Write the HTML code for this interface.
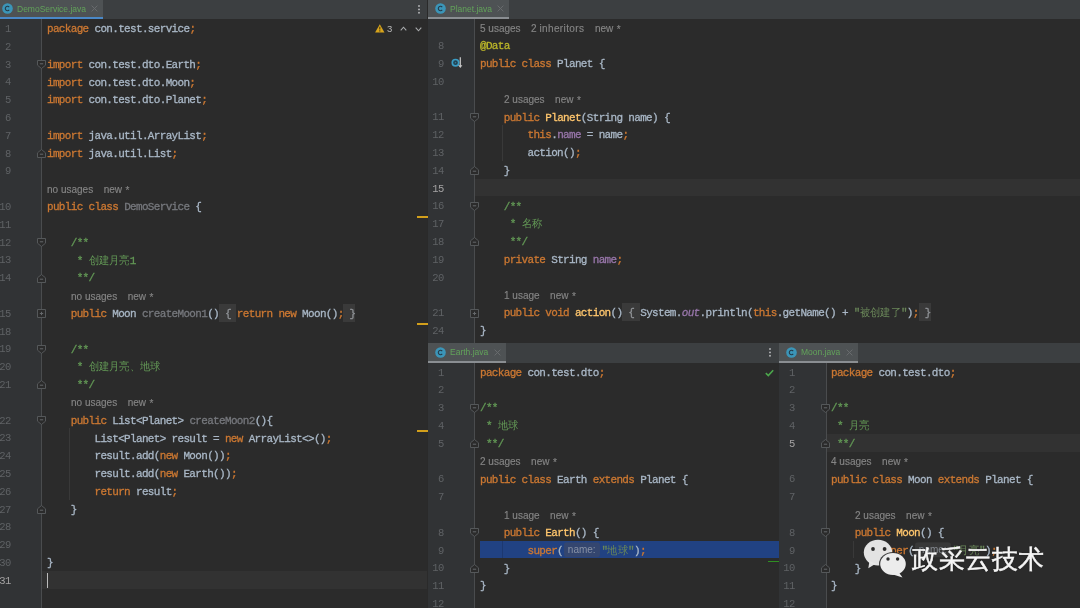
<!DOCTYPE html>
<html><head><meta charset="utf-8"><style>
html,body{margin:0;padding:0;background:#2b2b2b;}
body{width:1080px;height:608px;overflow:hidden;position:relative;}
div,svg{position:absolute;}
body{-webkit-font-smoothing:antialiased;}
.code,.ln,.hint,.tabtxt,.wm,.w3{will-change:transform;}
.tabbar{background:#3c3f41;}
.tab{background:#4e5254;}
.ulf{background:#4a88c7;}
.ulu{background:#8a8e92;}
.ed{background:#2b2b2b;}
.gut{background:#313335;}
.curl{background:#323232;}
.foldline{width:1px;background:#4a4c4e;}
.guide{width:1px;background:#393939;}
.gsel{background:#1c3870;}
.sel{background:#214283;}
.fbox{background:#3a3a3a;}
.tabtxt{font-family:"Liberation Sans",sans-serif;font-size:8.5px;color:#62a35a;white-space:pre;}
.ln{font-family:"Liberation Mono",monospace;font-size:10.5px;letter-spacing:-0.4px;color:#5f6265;text-align:right;white-space:pre;}
.ln.cur{color:#a4a3a3;}
.code{font-family:"Liberation Mono",monospace;font-size:11.0px;letter-spacing:-0.670px;white-space:pre;-webkit-text-stroke:0.3px currentColor;transform:scaleY(1.07);transform-origin:0 11.8px;}
.cj{font-size:10.4px;letter-spacing:0.3px;-webkit-text-stroke:0;}
.hint{font-family:"Liberation Sans",sans-serif;font-size:10px;color:#858585;white-space:pre;-webkit-text-stroke:0.15px currentColor;}
.gap{display:inline-block;width:10.5px;}
.ast{position:relative;top:0.8px;left:0.8px;}
.k{color:#cc7832}.t{color:#a9b7c6}.g{color:#76787d}.d{color:#629755}.a{color:#bbb529}
.m{color:#ffc66d}.f{color:#9876aa}.fi{color:#9876aa;font-style:italic}.s{color:#6a8759}.bb{color:#8f9296}
.ph{display:inline-block;box-sizing:border-box;height:14px;line-height:14px;vertical-align:1px;padding:0 0 0 3.5px;margin:0 1.7px 0 1.3px;width:35.5px;color:#858a90;background:#383838;border-radius:3px;font-family:"Liberation Sans",sans-serif;font-size:10px;letter-spacing:0;-webkit-text-stroke:0;}
.phs{background:#34466f;color:#8892a6;}
.dots{width:2px;}
.wm{font-family:"Liberation Sans",sans-serif;font-size:26.4px;color:#f6f6f6;white-space:pre;letter-spacing:0.6px;-webkit-text-stroke:0.45px #f6f6f6;text-shadow:0 0 2px rgba(0,0,0,0.35);}
</style></head><body>

<div class="tabbar" style="left:0.00px;top:0.00px;width:427.00px;height:19.00px;"></div>
<div class="tab" style="left:0.00px;top:0.00px;width:103.00px;height:19.00px;"></div>
<div class="ulf" style="left:0.00px;top:16.70px;width:103.00px;height:2.30px;"></div>
<svg class="ic" style="left:1.70px;top:3.40px" width="11" height="11" viewBox="0 0 11 11"><circle cx="5.5" cy="5.5" r="5.3" fill="#3b95b8"/><path d="M7.2 4.1A2.2 2.2 0 1 0 7.2 6.9" fill="none" stroke="#243a48" stroke-width="1.1"/></svg>
<div class="tabtxt" style="left:16.60px;top:-0.40px;height:19.00px;line-height:19.00px">DemoService.java</div>
<svg class="ic" style="left:91.20px;top:5.40px" width="7" height="7" viewBox="0 0 7 7"><path d="M0.6 0.6L6.4 6.4M6.4 0.6L0.6 6.4" stroke="#6b6e71" stroke-width="0.9"/></svg>
<div class="ed" style="left:0.00px;top:19.00px;width:427.00px;height:589.00px;"></div>
<div class="gut" style="left:0.00px;top:19.00px;width:41.70px;height:589.00px;"></div>
<div class="curl" style="left:41.70px;top:570.80px;width:385.30px;height:17.80px;"></div>
<div class="foldline" style="left:41.20px;top:19.00px;height:589.00px;"></div>
<div class="ln" style="left:-29.30px;top:21.00px;width:40.00px;height:17.80px;line-height:17.80px">1</div>
<div class="code" style="left:46.50px;top:21.20px;height:17.80px;line-height:17.80px"><span class="k">package</span><span class="t"> con.test.service</span><span class="k">;</span></div>
<div class="ln" style="left:-29.30px;top:38.80px;width:40.00px;height:17.80px;line-height:17.80px">2</div>
<div class="ln" style="left:-29.30px;top:56.60px;width:40.00px;height:17.80px;line-height:17.80px">3</div>
<div class="code" style="left:46.50px;top:56.80px;height:17.80px;line-height:17.80px"><span class="k">import</span><span class="t"> con.test.dto.Earth</span><span class="k">;</span></div>
<svg class="ic" style="left:36.70px;top:60.00px" width="9" height="9" viewBox="0 0 9 9"><path d="M0.5 0.5H8.5V5.2L4.5 8.5L0.5 5.2Z" fill="#2b2b2b" stroke="#55585a" stroke-width="1"/><path d="M2.8 3.8H6.2" stroke="#66696c" stroke-width="1"/></svg>
<div class="ln" style="left:-29.30px;top:74.40px;width:40.00px;height:17.80px;line-height:17.80px">4</div>
<div class="code" style="left:46.50px;top:74.60px;height:17.80px;line-height:17.80px"><span class="k">import</span><span class="t"> con.test.dto.Moon</span><span class="k">;</span></div>
<div class="ln" style="left:-29.30px;top:92.20px;width:40.00px;height:17.80px;line-height:17.80px">5</div>
<div class="code" style="left:46.50px;top:92.40px;height:17.80px;line-height:17.80px"><span class="k">import</span><span class="t"> con.test.dto.Planet</span><span class="k">;</span></div>
<div class="ln" style="left:-29.30px;top:110.00px;width:40.00px;height:17.80px;line-height:17.80px">6</div>
<div class="ln" style="left:-29.30px;top:127.80px;width:40.00px;height:17.80px;line-height:17.80px">7</div>
<div class="code" style="left:46.50px;top:128.00px;height:17.80px;line-height:17.80px"><span class="k">import</span><span class="t"> java.util.ArrayList</span><span class="k">;</span></div>
<div class="ln" style="left:-29.30px;top:145.60px;width:40.00px;height:17.80px;line-height:17.80px">8</div>
<div class="code" style="left:46.50px;top:145.80px;height:17.80px;line-height:17.80px"><span class="k">import</span><span class="t"> java.util.List</span><span class="k">;</span></div>
<svg class="ic" style="left:36.70px;top:149.00px" width="9" height="9" viewBox="0 0 9 9"><path d="M0.5 8.5H8.5V3.8L4.5 0.5L0.5 3.8Z" fill="#2b2b2b" stroke="#55585a" stroke-width="1"/><path d="M2.8 5.2H6.2" stroke="#66696c" stroke-width="1"/></svg>
<div class="ln" style="left:-29.30px;top:163.40px;width:40.00px;height:17.80px;line-height:17.80px">9</div>
<div class="hint" style="left:47.00px;top:180.70px;height:17.80px;line-height:17.80px">no usages<span class="gap"></span>new <span class="ast">*</span></div>
<div class="ln" style="left:-29.30px;top:199.00px;width:40.00px;height:17.80px;line-height:17.80px">10</div>
<div class="code" style="left:46.50px;top:199.20px;height:17.80px;line-height:17.80px"><span class="k">public</span><span class="t"> </span><span class="k">class</span><span class="t"> </span><span class="g">DemoService</span><span class="t"> {</span></div>
<div class="ln" style="left:-29.30px;top:216.80px;width:40.00px;height:17.80px;line-height:17.80px">11</div>
<div class="ln" style="left:-29.30px;top:234.60px;width:40.00px;height:17.80px;line-height:17.80px">12</div>
<div class="code" style="left:46.50px;top:234.80px;height:17.80px;line-height:17.80px"><span class="t">    </span><span class="d">/**</span></div>
<svg class="ic" style="left:36.70px;top:238.00px" width="9" height="9" viewBox="0 0 9 9"><path d="M0.5 0.5H8.5V5.2L4.5 8.5L0.5 5.2Z" fill="#2b2b2b" stroke="#55585a" stroke-width="1"/><path d="M2.8 3.8H6.2" stroke="#66696c" stroke-width="1"/></svg>
<div class="ln" style="left:-29.30px;top:252.40px;width:40.00px;height:17.80px;line-height:17.80px">13</div>
<div class="code" style="left:46.50px;top:252.60px;height:17.80px;line-height:17.80px"><span class="t">     </span><span class="d">* <span class="cj">创建月亮</span>1</span></div>
<div class="ln" style="left:-29.30px;top:270.20px;width:40.00px;height:17.80px;line-height:17.80px">14</div>
<div class="code" style="left:46.50px;top:270.40px;height:17.80px;line-height:17.80px"><span class="t">     </span><span class="d">**/</span></div>
<svg class="ic" style="left:36.70px;top:273.60px" width="9" height="9" viewBox="0 0 9 9"><path d="M0.5 8.5H8.5V3.8L4.5 0.5L0.5 3.8Z" fill="#2b2b2b" stroke="#55585a" stroke-width="1"/><path d="M2.8 5.2H6.2" stroke="#66696c" stroke-width="1"/></svg>
<div class="hint" style="left:70.72px;top:287.50px;height:17.80px;line-height:17.80px">no usages<span class="gap"></span>new <span class="ast">*</span></div>
<div class="fbox" style="left:218.67px;top:303.80px;width:17.79px;height:17.80px;"></div>
<div class="fbox" style="left:343.20px;top:303.80px;width:11.86px;height:17.80px;"></div>
<div class="ln" style="left:-29.30px;top:305.80px;width:40.00px;height:17.80px;line-height:17.80px">15</div>
<div class="code" style="left:46.50px;top:306.00px;height:17.80px;line-height:17.80px"><span class="t">    </span><span class="k">public</span><span class="t"> Moon </span><span class="g">createMoon1</span><span class="t">()</span><span class="bb"> { </span><span class="k">return</span><span class="t"> </span><span class="k">new</span><span class="t"> Moon()</span><span class="k">;</span><span class="bb"> }</span></div>
<svg class="ic" style="left:36.70px;top:309.20px" width="9" height="9" viewBox="0 0 9 9"><path d="M0.5 0.5H8.5V8.5H0.5Z" fill="#2b2b2b" stroke="#55585a" stroke-width="1"/><path d="M2.8 4.5H6.2M4.5 2.8V6.2" stroke="#66696c" stroke-width="1"/></svg>
<div class="ln" style="left:-29.30px;top:323.60px;width:40.00px;height:17.80px;line-height:17.80px">18</div>
<div class="ln" style="left:-29.30px;top:341.40px;width:40.00px;height:17.80px;line-height:17.80px">19</div>
<div class="code" style="left:46.50px;top:341.60px;height:17.80px;line-height:17.80px"><span class="t">    </span><span class="d">/**</span></div>
<svg class="ic" style="left:36.70px;top:344.80px" width="9" height="9" viewBox="0 0 9 9"><path d="M0.5 0.5H8.5V5.2L4.5 8.5L0.5 5.2Z" fill="#2b2b2b" stroke="#55585a" stroke-width="1"/><path d="M2.8 3.8H6.2" stroke="#66696c" stroke-width="1"/></svg>
<div class="ln" style="left:-29.30px;top:359.20px;width:40.00px;height:17.80px;line-height:17.80px">20</div>
<div class="code" style="left:46.50px;top:359.40px;height:17.80px;line-height:17.80px"><span class="t">     </span><span class="d">* <span class="cj">创建月亮、地球</span></span></div>
<div class="ln" style="left:-29.30px;top:377.00px;width:40.00px;height:17.80px;line-height:17.80px">21</div>
<div class="code" style="left:46.50px;top:377.20px;height:17.80px;line-height:17.80px"><span class="t">     </span><span class="d">**/</span></div>
<svg class="ic" style="left:36.70px;top:380.40px" width="9" height="9" viewBox="0 0 9 9"><path d="M0.5 8.5H8.5V3.8L4.5 0.5L0.5 3.8Z" fill="#2b2b2b" stroke="#55585a" stroke-width="1"/><path d="M2.8 5.2H6.2" stroke="#66696c" stroke-width="1"/></svg>
<div class="hint" style="left:70.72px;top:394.30px;height:17.80px;line-height:17.80px">no usages<span class="gap"></span>new <span class="ast">*</span></div>
<div class="ln" style="left:-29.30px;top:412.60px;width:40.00px;height:17.80px;line-height:17.80px">22</div>
<div class="code" style="left:46.50px;top:412.80px;height:17.80px;line-height:17.80px"><span class="t">    </span><span class="k">public</span><span class="t"> List&lt;Planet&gt; </span><span class="g">createMoon2</span><span class="t">(){</span></div>
<svg class="ic" style="left:36.70px;top:416.00px" width="9" height="9" viewBox="0 0 9 9"><path d="M0.5 0.5H8.5V5.2L4.5 8.5L0.5 5.2Z" fill="#2b2b2b" stroke="#55585a" stroke-width="1"/><path d="M2.8 3.8H6.2" stroke="#66696c" stroke-width="1"/></svg>
<div class="guide" style="left:68.62px;top:428.40px;height:71.20px;"></div>
<div class="ln" style="left:-29.30px;top:430.40px;width:40.00px;height:17.80px;line-height:17.80px">23</div>
<div class="code" style="left:46.50px;top:430.60px;height:17.80px;line-height:17.80px"><span class="t">        List&lt;Planet&gt; result = </span><span class="k">new</span><span class="t"> ArrayList&lt;&gt;()</span><span class="k">;</span></div>
<div class="ln" style="left:-29.30px;top:448.20px;width:40.00px;height:17.80px;line-height:17.80px">24</div>
<div class="code" style="left:46.50px;top:448.40px;height:17.80px;line-height:17.80px"><span class="t">        result.add(</span><span class="k">new</span><span class="t"> Moon())</span><span class="k">;</span></div>
<div class="ln" style="left:-29.30px;top:466.00px;width:40.00px;height:17.80px;line-height:17.80px">25</div>
<div class="code" style="left:46.50px;top:466.20px;height:17.80px;line-height:17.80px"><span class="t">        result.add(</span><span class="k">new</span><span class="t"> Earth())</span><span class="k">;</span></div>
<div class="ln" style="left:-29.30px;top:483.80px;width:40.00px;height:17.80px;line-height:17.80px">26</div>
<div class="code" style="left:46.50px;top:484.00px;height:17.80px;line-height:17.80px"><span class="t">        </span><span class="k">return</span><span class="t"> result</span><span class="k">;</span></div>
<div class="ln" style="left:-29.30px;top:501.60px;width:40.00px;height:17.80px;line-height:17.80px">27</div>
<div class="code" style="left:46.50px;top:501.80px;height:17.80px;line-height:17.80px"><span class="t">    }</span></div>
<svg class="ic" style="left:36.70px;top:505.00px" width="9" height="9" viewBox="0 0 9 9"><path d="M0.5 8.5H8.5V3.8L4.5 0.5L0.5 3.8Z" fill="#2b2b2b" stroke="#55585a" stroke-width="1"/><path d="M2.8 5.2H6.2" stroke="#66696c" stroke-width="1"/></svg>
<div class="ln" style="left:-29.30px;top:519.40px;width:40.00px;height:17.80px;line-height:17.80px">28</div>
<div class="ln" style="left:-29.30px;top:537.20px;width:40.00px;height:17.80px;line-height:17.80px">29</div>
<div class="ln" style="left:-29.30px;top:555.00px;width:40.00px;height:17.80px;line-height:17.80px">30</div>
<div class="code" style="left:46.50px;top:555.20px;height:17.80px;line-height:17.80px"><span class="t">}</span></div>
<div class="ln cur" style="left:-29.30px;top:572.80px;width:40.00px;height:17.80px;line-height:17.80px">31</div>
<div class="tabbar" style="left:428.00px;top:0.00px;width:652.00px;height:19.10px;"></div>
<div class="tab" style="left:428.00px;top:0.00px;width:81.00px;height:19.10px;"></div>
<div class="ulu" style="left:428.00px;top:16.80px;width:81.00px;height:2.30px;"></div>
<svg class="ic" style="left:434.70px;top:3.40px" width="11" height="11" viewBox="0 0 11 11"><circle cx="5.5" cy="5.5" r="5.3" fill="#3b95b8"/><path d="M7.2 4.1A2.2 2.2 0 1 0 7.2 6.9" fill="none" stroke="#243a48" stroke-width="1.1"/></svg>
<div class="tabtxt" style="left:449.60px;top:-0.40px;height:19.10px;line-height:19.10px">Planet.java</div>
<svg class="ic" style="left:497.20px;top:5.40px" width="7" height="7" viewBox="0 0 7 7"><path d="M0.6 0.6L6.4 6.4M6.4 0.6L0.6 6.4" stroke="#6b6e71" stroke-width="0.9"/></svg>
<div class="ed" style="left:428.00px;top:19.10px;width:652.00px;height:323.70px;"></div>
<div class="gut" style="left:428.00px;top:19.10px;width:46.70px;height:323.70px;"></div>
<div class="curl" style="left:474.70px;top:178.50px;width:605.30px;height:17.80px;"></div>
<div class="foldline" style="left:474.20px;top:19.10px;height:323.70px;"></div>
<div class="hint" style="left:480.00px;top:19.80px;height:17.80px;line-height:17.80px">5 usages<span class="gap"></span>2 <span style="letter-spacing:.38px">inheritors</span><span class="gap"></span>new <span class="ast">*</span></div>
<div class="ln" style="left:403.70px;top:38.10px;width:40.00px;height:17.80px;line-height:17.80px">8</div>
<div class="code" style="left:479.50px;top:38.30px;height:17.80px;line-height:17.80px"><span class="a">@Data</span></div>
<div class="ln" style="left:403.70px;top:55.90px;width:40.00px;height:17.80px;line-height:17.80px">9</div>
<div class="code" style="left:479.50px;top:56.10px;height:17.80px;line-height:17.80px"><span class="k">public</span><span class="t"> </span><span class="k">class</span><span class="t"> Planet {</span></div>
<div class="ln" style="left:403.70px;top:73.70px;width:40.00px;height:17.80px;line-height:17.80px">10</div>
<div class="hint" style="left:503.72px;top:91.00px;height:17.80px;line-height:17.80px">2 usages<span class="gap"></span>new <span class="ast">*</span></div>
<div class="ln" style="left:403.70px;top:109.30px;width:40.00px;height:17.80px;line-height:17.80px">11</div>
<div class="code" style="left:479.50px;top:109.50px;height:17.80px;line-height:17.80px"><span class="t">    </span><span class="k">public</span><span class="t"> </span><span class="m">Planet</span><span class="t">(String name) {</span></div>
<svg class="ic" style="left:469.70px;top:112.70px" width="9" height="9" viewBox="0 0 9 9"><path d="M0.5 0.5H8.5V5.2L4.5 8.5L0.5 5.2Z" fill="#2b2b2b" stroke="#55585a" stroke-width="1"/><path d="M2.8 3.8H6.2" stroke="#66696c" stroke-width="1"/></svg>
<div class="guide" style="left:501.62px;top:125.10px;height:35.60px;"></div>
<div class="ln" style="left:403.70px;top:127.10px;width:40.00px;height:17.80px;line-height:17.80px">12</div>
<div class="code" style="left:479.50px;top:127.30px;height:17.80px;line-height:17.80px"><span class="t">        </span><span class="k">this</span><span class="t">.</span><span class="f">name</span><span class="t"> = name</span><span class="k">;</span></div>
<div class="ln" style="left:403.70px;top:144.90px;width:40.00px;height:17.80px;line-height:17.80px">13</div>
<div class="code" style="left:479.50px;top:145.10px;height:17.80px;line-height:17.80px"><span class="t">        action()</span><span class="k">;</span></div>
<div class="ln" style="left:403.70px;top:162.70px;width:40.00px;height:17.80px;line-height:17.80px">14</div>
<div class="code" style="left:479.50px;top:162.90px;height:17.80px;line-height:17.80px"><span class="t">    }</span></div>
<svg class="ic" style="left:469.70px;top:166.10px" width="9" height="9" viewBox="0 0 9 9"><path d="M0.5 8.5H8.5V3.8L4.5 0.5L0.5 3.8Z" fill="#2b2b2b" stroke="#55585a" stroke-width="1"/><path d="M2.8 5.2H6.2" stroke="#66696c" stroke-width="1"/></svg>
<div class="ln cur" style="left:403.70px;top:180.50px;width:40.00px;height:17.80px;line-height:17.80px">15</div>
<div class="ln" style="left:403.70px;top:198.30px;width:40.00px;height:17.80px;line-height:17.80px">16</div>
<div class="code" style="left:479.50px;top:198.50px;height:17.80px;line-height:17.80px"><span class="t">    </span><span class="d">/**</span></div>
<svg class="ic" style="left:469.70px;top:201.70px" width="9" height="9" viewBox="0 0 9 9"><path d="M0.5 0.5H8.5V5.2L4.5 8.5L0.5 5.2Z" fill="#2b2b2b" stroke="#55585a" stroke-width="1"/><path d="M2.8 3.8H6.2" stroke="#66696c" stroke-width="1"/></svg>
<div class="ln" style="left:403.70px;top:216.10px;width:40.00px;height:17.80px;line-height:17.80px">17</div>
<div class="code" style="left:479.50px;top:216.30px;height:17.80px;line-height:17.80px"><span class="t">     </span><span class="d">* <span class="cj">名称</span></span></div>
<div class="ln" style="left:403.70px;top:233.90px;width:40.00px;height:17.80px;line-height:17.80px">18</div>
<div class="code" style="left:479.50px;top:234.10px;height:17.80px;line-height:17.80px"><span class="t">     </span><span class="d">**/</span></div>
<svg class="ic" style="left:469.70px;top:237.30px" width="9" height="9" viewBox="0 0 9 9"><path d="M0.5 8.5H8.5V3.8L4.5 0.5L0.5 3.8Z" fill="#2b2b2b" stroke="#55585a" stroke-width="1"/><path d="M2.8 5.2H6.2" stroke="#66696c" stroke-width="1"/></svg>
<div class="ln" style="left:403.70px;top:251.70px;width:40.00px;height:17.80px;line-height:17.80px">19</div>
<div class="code" style="left:479.50px;top:251.90px;height:17.80px;line-height:17.80px"><span class="t">    </span><span class="k">private</span><span class="t"> String </span><span class="f">name</span><span class="k">;</span></div>
<div class="ln" style="left:403.70px;top:269.50px;width:40.00px;height:17.80px;line-height:17.80px">20</div>
<div class="hint" style="left:503.72px;top:286.80px;height:17.80px;line-height:17.80px">1 usage<span class="gap"></span>new <span class="ast">*</span></div>
<div class="fbox" style="left:622.02px;top:303.10px;width:17.79px;height:17.80px;"></div>
<div class="fbox" style="left:919.20px;top:303.10px;width:11.80px;height:17.80px;"></div>
<div class="ln" style="left:403.70px;top:305.10px;width:40.00px;height:17.80px;line-height:17.80px">21</div>
<div class="code" style="left:479.50px;top:305.30px;height:17.80px;line-height:17.80px"><span class="t">    </span><span class="k">public</span><span class="t"> </span><span class="k">void</span><span class="t"> </span><span class="m">action</span><span class="t">()</span><span class="bb"> { </span><span class="t">System.</span><span class="fi">out</span><span class="t">.println(</span><span class="k">this</span><span class="t">.getName() + </span><span class="s">"<span class="cj">被创建了</span>"</span><span class="t">)</span><span class="k">;</span><span class="bb"> }</span></div>
<svg class="ic" style="left:469.70px;top:308.50px" width="9" height="9" viewBox="0 0 9 9"><path d="M0.5 0.5H8.5V8.5H0.5Z" fill="#2b2b2b" stroke="#55585a" stroke-width="1"/><path d="M2.8 4.5H6.2M4.5 2.8V6.2" stroke="#66696c" stroke-width="1"/></svg>
<div class="ln" style="left:403.70px;top:322.90px;width:40.00px;height:17.80px;line-height:17.80px">24</div>
<div class="code" style="left:479.50px;top:323.10px;height:17.80px;line-height:17.80px"><span class="t">}</span></div>
<div class="tabbar" style="left:428.00px;top:343.20px;width:350.70px;height:19.80px;"></div>
<div class="tab" style="left:428.00px;top:343.20px;width:77.50px;height:19.80px;"></div>
<div class="ulu" style="left:428.00px;top:360.70px;width:77.50px;height:2.30px;"></div>
<svg class="ic" style="left:434.70px;top:346.60px" width="11" height="11" viewBox="0 0 11 11"><circle cx="5.5" cy="5.5" r="5.3" fill="#3b95b8"/><path d="M7.2 4.1A2.2 2.2 0 1 0 7.2 6.9" fill="none" stroke="#243a48" stroke-width="1.1"/></svg>
<div class="tabtxt" style="left:449.60px;top:342.80px;height:19.80px;line-height:19.80px">Earth.java</div>
<svg class="ic" style="left:493.70px;top:348.60px" width="7" height="7" viewBox="0 0 7 7"><path d="M0.6 0.6L6.4 6.4M6.4 0.6L0.6 6.4" stroke="#6b6e71" stroke-width="0.9"/></svg>
<div class="ed" style="left:428.00px;top:363.00px;width:350.70px;height:245.00px;"></div>
<div class="gut" style="left:428.00px;top:363.00px;width:46.70px;height:245.00px;"></div>
<div class="foldline" style="left:474.20px;top:363.00px;height:245.00px;"></div>
<div class="ln" style="left:403.70px;top:364.60px;width:40.00px;height:17.80px;line-height:17.80px">1</div>
<div class="code" style="left:479.50px;top:364.80px;height:17.80px;line-height:17.80px"><span class="k">package</span><span class="t"> con.test.dto</span><span class="k">;</span></div>
<div class="ln" style="left:403.70px;top:382.40px;width:40.00px;height:17.80px;line-height:17.80px">2</div>
<div class="ln" style="left:403.70px;top:400.20px;width:40.00px;height:17.80px;line-height:17.80px">3</div>
<div class="code" style="left:479.50px;top:400.40px;height:17.80px;line-height:17.80px"><span class="d">/**</span></div>
<svg class="ic" style="left:469.70px;top:403.60px" width="9" height="9" viewBox="0 0 9 9"><path d="M0.5 0.5H8.5V5.2L4.5 8.5L0.5 5.2Z" fill="#2b2b2b" stroke="#55585a" stroke-width="1"/><path d="M2.8 3.8H6.2" stroke="#66696c" stroke-width="1"/></svg>
<div class="ln" style="left:403.70px;top:418.00px;width:40.00px;height:17.80px;line-height:17.80px">4</div>
<div class="code" style="left:479.50px;top:418.20px;height:17.80px;line-height:17.80px"><span class="t"> </span><span class="d">* <span class="cj">地球</span></span></div>
<div class="ln" style="left:403.70px;top:435.80px;width:40.00px;height:17.80px;line-height:17.80px">5</div>
<div class="code" style="left:479.50px;top:436.00px;height:17.80px;line-height:17.80px"><span class="t"> </span><span class="d">**/</span></div>
<svg class="ic" style="left:469.70px;top:439.20px" width="9" height="9" viewBox="0 0 9 9"><path d="M0.5 8.5H8.5V3.8L4.5 0.5L0.5 3.8Z" fill="#2b2b2b" stroke="#55585a" stroke-width="1"/><path d="M2.8 5.2H6.2" stroke="#66696c" stroke-width="1"/></svg>
<div class="hint" style="left:480.00px;top:453.10px;height:17.80px;line-height:17.80px">2 usages<span class="gap"></span>new <span class="ast">*</span></div>
<div class="ln" style="left:403.70px;top:471.40px;width:40.00px;height:17.80px;line-height:17.80px">6</div>
<div class="code" style="left:479.50px;top:471.60px;height:17.80px;line-height:17.80px"><span class="k">public</span><span class="t"> </span><span class="k">class</span><span class="t"> Earth </span><span class="k">extends</span><span class="t"> Planet {</span></div>
<div class="ln" style="left:403.70px;top:489.20px;width:40.00px;height:17.80px;line-height:17.80px">7</div>
<div class="hint" style="left:503.72px;top:506.50px;height:17.80px;line-height:17.80px">1 usage<span class="gap"></span>new <span class="ast">*</span></div>
<div class="ln" style="left:403.70px;top:524.80px;width:40.00px;height:17.80px;line-height:17.80px">8</div>
<div class="code" style="left:479.50px;top:525.00px;height:17.80px;line-height:17.80px"><span class="t">    </span><span class="k">public</span><span class="t"> </span><span class="m">Earth</span><span class="t">() {</span></div>
<svg class="ic" style="left:469.70px;top:528.20px" width="9" height="9" viewBox="0 0 9 9"><path d="M0.5 0.5H8.5V5.2L4.5 8.5L0.5 5.2Z" fill="#2b2b2b" stroke="#55585a" stroke-width="1"/><path d="M2.8 3.8H6.2" stroke="#66696c" stroke-width="1"/></svg>
<div class="sel" style="left:480.00px;top:540.60px;width:298.70px;height:17.80px;"></div>
<div class="guide gsel" style="left:501.62px;top:540.60px;height:17.80px;"></div>
<div class="ln" style="left:403.70px;top:542.60px;width:40.00px;height:17.80px;line-height:17.80px">9</div>
<div class="code" style="left:479.50px;top:542.80px;height:17.80px;line-height:17.80px"><span class="t">        </span><span class="k">super</span><span class="t">(</span><span class="ph phs">name:</span><span class="s">"<span class="cj">地球</span>"</span><span class="t">)</span><span class="k">;</span></div>
<div class="ln" style="left:403.70px;top:560.40px;width:40.00px;height:17.80px;line-height:17.80px">10</div>
<div class="code" style="left:479.50px;top:560.60px;height:17.80px;line-height:17.80px"><span class="t">    }</span></div>
<svg class="ic" style="left:469.70px;top:563.80px" width="9" height="9" viewBox="0 0 9 9"><path d="M0.5 8.5H8.5V3.8L4.5 0.5L0.5 3.8Z" fill="#2b2b2b" stroke="#55585a" stroke-width="1"/><path d="M2.8 5.2H6.2" stroke="#66696c" stroke-width="1"/></svg>
<div class="ln" style="left:403.70px;top:578.20px;width:40.00px;height:17.80px;line-height:17.80px">11</div>
<div class="code" style="left:479.50px;top:578.40px;height:17.80px;line-height:17.80px"><span class="t">}</span></div>
<div class="ln" style="left:403.70px;top:596.00px;width:40.00px;height:17.80px;line-height:17.80px">12</div>
<div class="tabbar" style="left:779.30px;top:343.20px;width:300.70px;height:19.80px;"></div>
<div class="tab" style="left:779.30px;top:343.20px;width:78.70px;height:19.80px;"></div>
<div class="ulu" style="left:779.30px;top:360.70px;width:78.70px;height:2.30px;"></div>
<svg class="ic" style="left:786.00px;top:346.60px" width="11" height="11" viewBox="0 0 11 11"><circle cx="5.5" cy="5.5" r="5.3" fill="#3b95b8"/><path d="M7.2 4.1A2.2 2.2 0 1 0 7.2 6.9" fill="none" stroke="#243a48" stroke-width="1.1"/></svg>
<div class="tabtxt" style="left:800.90px;top:342.80px;height:19.80px;line-height:19.80px">Moon.java</div>
<svg class="ic" style="left:846.20px;top:348.60px" width="7" height="7" viewBox="0 0 7 7"><path d="M0.6 0.6L6.4 6.4M6.4 0.6L0.6 6.4" stroke="#6b6e71" stroke-width="0.9"/></svg>
<div class="ed" style="left:779.30px;top:363.00px;width:300.70px;height:245.00px;"></div>
<div class="gut" style="left:779.30px;top:363.00px;width:46.70px;height:245.00px;"></div>
<div class="curl" style="left:826.00px;top:433.80px;width:254.00px;height:17.80px;"></div>
<div class="foldline" style="left:825.50px;top:363.00px;height:245.00px;"></div>
<div class="ln" style="left:755.00px;top:364.60px;width:40.00px;height:17.80px;line-height:17.80px">1</div>
<div class="code" style="left:830.80px;top:364.80px;height:17.80px;line-height:17.80px"><span class="k">package</span><span class="t"> con.test.dto</span><span class="k">;</span></div>
<div class="ln" style="left:755.00px;top:382.40px;width:40.00px;height:17.80px;line-height:17.80px">2</div>
<div class="ln" style="left:755.00px;top:400.20px;width:40.00px;height:17.80px;line-height:17.80px">3</div>
<div class="code" style="left:830.80px;top:400.40px;height:17.80px;line-height:17.80px"><span class="d">/**</span></div>
<svg class="ic" style="left:821.00px;top:403.60px" width="9" height="9" viewBox="0 0 9 9"><path d="M0.5 0.5H8.5V5.2L4.5 8.5L0.5 5.2Z" fill="#2b2b2b" stroke="#55585a" stroke-width="1"/><path d="M2.8 3.8H6.2" stroke="#66696c" stroke-width="1"/></svg>
<div class="ln" style="left:755.00px;top:418.00px;width:40.00px;height:17.80px;line-height:17.80px">4</div>
<div class="code" style="left:830.80px;top:418.20px;height:17.80px;line-height:17.80px"><span class="t"> </span><span class="d">* <span class="cj">月亮</span></span></div>
<div class="ln cur" style="left:755.00px;top:435.80px;width:40.00px;height:17.80px;line-height:17.80px">5</div>
<div class="code" style="left:830.80px;top:436.00px;height:17.80px;line-height:17.80px"><span class="t"> </span><span class="d">**/</span></div>
<svg class="ic" style="left:821.00px;top:439.20px" width="9" height="9" viewBox="0 0 9 9"><path d="M0.5 8.5H8.5V3.8L4.5 0.5L0.5 3.8Z" fill="#2b2b2b" stroke="#55585a" stroke-width="1"/><path d="M2.8 5.2H6.2" stroke="#66696c" stroke-width="1"/></svg>
<div class="hint" style="left:831.30px;top:453.10px;height:17.80px;line-height:17.80px">4 usages<span class="gap"></span>new <span class="ast">*</span></div>
<div class="ln" style="left:755.00px;top:471.40px;width:40.00px;height:17.80px;line-height:17.80px">6</div>
<div class="code" style="left:830.80px;top:471.60px;height:17.80px;line-height:17.80px"><span class="k">public</span><span class="t"> </span><span class="k">class</span><span class="t"> Moon </span><span class="k">extends</span><span class="t"> Planet {</span></div>
<div class="ln" style="left:755.00px;top:489.20px;width:40.00px;height:17.80px;line-height:17.80px">7</div>
<div class="hint" style="left:855.02px;top:506.50px;height:17.80px;line-height:17.80px">2 usages<span class="gap"></span>new <span class="ast">*</span></div>
<div class="ln" style="left:755.00px;top:524.80px;width:40.00px;height:17.80px;line-height:17.80px">8</div>
<div class="code" style="left:830.80px;top:525.00px;height:17.80px;line-height:17.80px"><span class="t">    </span><span class="k">public</span><span class="t"> </span><span class="m">Moon</span><span class="t">() {</span></div>
<svg class="ic" style="left:821.00px;top:528.20px" width="9" height="9" viewBox="0 0 9 9"><path d="M0.5 0.5H8.5V5.2L4.5 8.5L0.5 5.2Z" fill="#2b2b2b" stroke="#55585a" stroke-width="1"/><path d="M2.8 3.8H6.2" stroke="#66696c" stroke-width="1"/></svg>
<div class="guide" style="left:852.92px;top:540.60px;height:17.80px;"></div>
<div class="ln" style="left:755.00px;top:542.60px;width:40.00px;height:17.80px;line-height:17.80px">9</div>
<div class="code" style="left:830.80px;top:542.80px;height:17.80px;line-height:17.80px"><span class="t">        </span><span class="k">super</span><span class="t">(</span><span class="ph">name:</span><span class="s">"<span class="cj">月亮</span>"</span><span class="t">)</span><span class="k">;</span></div>
<div class="ln" style="left:755.00px;top:560.40px;width:40.00px;height:17.80px;line-height:17.80px">10</div>
<div class="code" style="left:830.80px;top:560.60px;height:17.80px;line-height:17.80px"><span class="t">    }</span></div>
<svg class="ic" style="left:821.00px;top:563.80px" width="9" height="9" viewBox="0 0 9 9"><path d="M0.5 8.5H8.5V3.8L4.5 0.5L0.5 3.8Z" fill="#2b2b2b" stroke="#55585a" stroke-width="1"/><path d="M2.8 5.2H6.2" stroke="#66696c" stroke-width="1"/></svg>
<div class="ln" style="left:755.00px;top:578.20px;width:40.00px;height:17.80px;line-height:17.80px">11</div>
<div class="code" style="left:830.80px;top:578.40px;height:17.80px;line-height:17.80px"><span class="t">}</span></div>
<div class="ln" style="left:755.00px;top:596.00px;width:40.00px;height:17.80px;line-height:17.80px">12</div>
<div class="sep" style="left:427.00px;top:0.00px;width:1.00px;height:608.00px;background:#2a2a2a"></div>
<div class="caret" style="left:46.50px;top:573.00px;width:1.20px;height:15.00px;background:#bbbbbb"></div>
<svg class="ic" style="left:416.70px;top:4.60px" width="4" height="10" viewBox="0 0 4 10"><circle cx="2" cy="1" r="0.95" fill="#b4b6b8"/><circle cx="2" cy="4.4" r="0.95" fill="#b4b6b8"/><circle cx="2" cy="7.8" r="0.95" fill="#b4b6b8"/></svg>
<svg class="ic" style="left:767.80px;top:347.60px" width="4" height="10" viewBox="0 0 4 10"><circle cx="2" cy="1" r="0.95" fill="#b4b6b8"/><circle cx="2" cy="4.4" r="0.95" fill="#b4b6b8"/><circle cx="2" cy="7.8" r="0.95" fill="#b4b6b8"/></svg>
<svg class="ic" style="left:375.2px;top:24.4px" width="10" height="9" viewBox="0 0 10 9"><path d="M4.8 0.2L9.5 8.4H0.1Z" fill="#d7a41c"/><path d="M4.8 2.8V5.4M4.8 6.3V7.4" stroke="#4a3a10" stroke-width="1.1"/></svg>
<div class="w3" style="left:386.80px;top:22.70px;height:12.00px;font-family:'Liberation Sans',sans-serif;font-size:9.5px;line-height:12px;color:#b8b8b8">3</div>
<svg class="ic" style="left:399.5px;top:26px" width="7" height="5" viewBox="0 0 7 5"><path d="M0.7 4.3L3.5 1.2L6.3 4.3" fill="none" stroke="#a8aaac" stroke-width="1.1"/></svg>
<svg class="ic" style="left:415.3px;top:26.6px" width="7" height="5" viewBox="0 0 7 5"><path d="M0.7 0.7L3.5 3.8L6.3 0.7" fill="none" stroke="#a8aaac" stroke-width="1.1"/></svg>
<div class="mk" style="left:417.00px;top:216.40px;width:10.80px;height:2.00px;background:#d29f1b"></div>
<div class="mk" style="left:417.00px;top:323.30px;width:10.80px;height:2.00px;background:#d29f1b"></div>
<div class="mk" style="left:417.00px;top:430.00px;width:10.80px;height:2.00px;background:#d29f1b"></div>
<div class="mk" style="left:768.20px;top:560.50px;width:10.40px;height:1.60px;background:#2f8f22"></div>
<svg class="ic" style="left:764.5px;top:368.5px" width="9" height="8" viewBox="0 0 9 8"><path d="M0.8 4.2L3.3 6.6L8.2 1.2" fill="none" stroke="#4ca74c" stroke-width="1.6"/></svg>
<svg class="ic" style="left:450.2px;top:56px" width="13" height="13" viewBox="0 0 13 13"><circle cx="5.5" cy="6.7" r="3.5" fill="#23404f"/><circle cx="5.5" cy="6.7" r="3.2" fill="none" stroke="#3a9cc4" stroke-width="1.7"/><path d="M4.8 5.6L6.6 6.7L4.8 7.8Z" fill="#3a9cc4" fill-opacity="0.7"/><path d="M10.3 1.2V10.5" stroke="#c9c9c9" stroke-width="1.2"/><path d="M8.2 9.3L10.3 12L12.4 9.3Z" fill="#c9c9c9"/></svg>
<svg class="ic" style="left:860px;top:536px" width="50" height="46" viewBox="0 0 50 46"><ellipse cx="18" cy="16.6" rx="14.2" ry="12.8" fill="#e9e9e9" fill-opacity="0.97"/><path d="M9.5 25L8.3 32.3L16 27.5Z" fill="#e9e9e9" fill-opacity="0.97"/><ellipse cx="33" cy="28" rx="14" ry="12" fill="#2b2b2b" fill-opacity="0.9"/><ellipse cx="33" cy="28" rx="12.8" ry="11" fill="#ececec"/><path d="M38.5 36L42.5 41.5L33 38.5Z" fill="#ececec"/><circle cx="13" cy="13" r="1.9" fill="#2b2b2b"/><circle cx="24.6" cy="13" r="1.9" fill="#2b2b2b"/><circle cx="28" cy="23" r="1.7" fill="#2b2b2b"/><circle cx="37.6" cy="23" r="1.7" fill="#2b2b2b"/></svg>
<div class="wm" style="left:911.60px;top:541.80px;height:34.00px;line-height:34px">政采云技术</div>
</body></html>
